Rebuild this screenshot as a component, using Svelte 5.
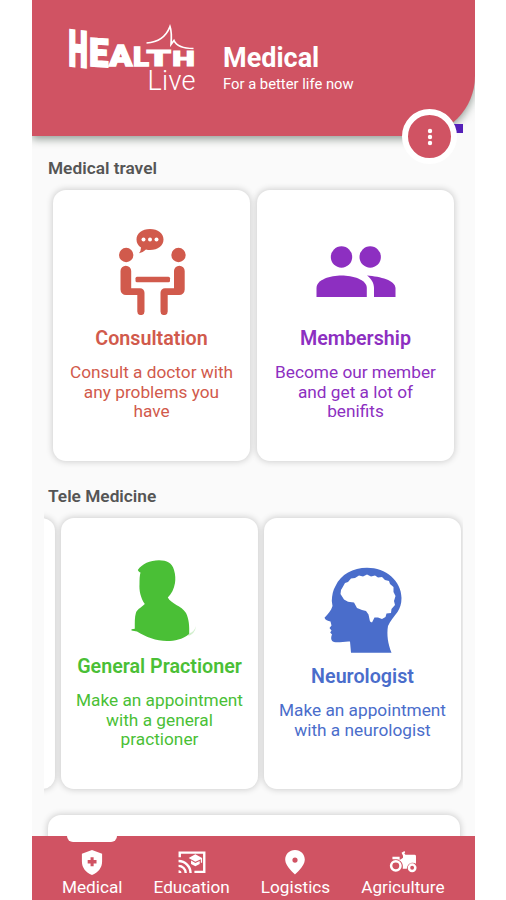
<script>
	const travel = [
		{
			icon: 'consultation',
			title: 'Consultation',
			lines: ['Consult a doctor with', 'any problems you', 'have'],
			tone: 'red'
		},
		{
			icon: 'members',
			title: 'Membership',
			lines: ['Become our member', 'and get a lot of', 'benifits'],
			tone: 'purple'
		}
	];

	const tele = [
		{
			icon: 'person',
			title: 'General Practioner',
			lines: ['Make an appointment', 'with a general', 'practioner'],
			tone: 'green'
		},
		{
			icon: 'brain',
			title: 'Neurologist',
			lines: ['Make an appointment', 'with a neurologist'],
			tone: 'blue'
		}
	];

	const tabs = [
		{ id: 'medical', label: 'Medical' },
		{ id: 'education', label: 'Education' },
		{ id: 'logistics', label: 'Logistics' },
		{ id: 'agriculture', label: 'Agriculture' }
	];

	// Each letter is squeezed towards the baseline to give the logo its slope
	const logo = [
		{ char: 'H', x: 0, width: 18.3, height: 38, skew: 6 },
		{ char: 'E', x: 21, width: 18, height: 29.5, skew: 4 },
		{ char: 'A', x: 39.5, width: 24, height: 22.5, skew: 0 },
		{ char: 'L', x: 64.5, width: 15, height: 19, skew: 0 },
		{ char: 'T', x: 77.5, width: 24, height: 17, skew: 0 },
		{ char: 'H', x: 104, width: 21.5, height: 15.5, skew: 0 }
	];
	// left edge and width of the inked part of each glyph at 100px
	const ink = { H: [2, 67], E: [2, 53], A: [-2, 71], L: [2, 51], T: [0, 62] };

	function letterTransform({ char, x, width, height, skew }) {
		const [left, inked] = ink[char];
		const sx = width / inked;
		const sy = height / 76;
		return `translate(${x - left * sx} ${42.5 - 2 * sy}) skewY(${skew}) scale(${sx} ${sy})`;
	}

	let active = $state('medical');
</script>

{#snippet picture(name)}
	<svg class="picture" viewBox="0 0 86 86" fill="currentColor">
		{#if name === 'consultation'}
			<circle cx="17.2" cy="26" r="7.2" />
			<circle cx="69.5" cy="26" r="7.2" />
			<path d="M11.5 42a5.3 5.3 0 0 1 10.7 0V59.3H31a4.5 4.5 0 0 1 4.5 4.5V82.5a3.6 3.6 0 0 1-7.2 0V66H17a5.5 5.5 0 0 1-5.5-5.5z" />
			<path d="M75.7 42a5.3 5.3 0 0 0-10.7 0V59.3H56a4.5 4.5 0 0 0-4.5 4.5V82.5a3.6 3.6 0 0 0 7.2 0V66H70.2a5.5 5.5 0 0 0 5.5-5.5z" />
			<rect x="26.5" y="47.7" width="34.5" height="5.6" rx="1.5" />
			<path d="M41 0c8 0 13.5 4.5 13.5 10.5S49 21 41 21q-2 0-4-.5-3 3-7 3.8 2-2.5 2-5.8c-3-2-4.5-4.5-4.5-8C27.5 4.5 33 0 41 0z" />
			<g class="dots">
				<circle cx="34.5" cy="10.5" r="2" />
				<circle cx="41" cy="10.5" r="2" />
				<circle cx="47.5" cy="10.5" r="2" />
			</g>
		{:else if name === 'members'}
			<circle cx="28.5" cy="28" r="10.7" />
			<circle cx="57.2" cy="28" r="10.7" />
			<path d="M3.5 68V59C3.5 50.5 17.5 46.5 28.5 46.5S53.8 50.5 53.8 59V68z" />
			<path d="M54 46.5C67.5 47.5 82.5 51.5 82.5 59V68H61V59C61 54 58.5 50 54 46.5z" />
		{:else if name === 'person'}
			<path d="M20.8 13C25 7 33 3.3 42 3.3C50 3.3 55 6 57 13C58.5 18 58.5 22 58 26C57 32 54.5 37 50.8 40.5C54 47 64.5 48.5 69 56C72 62 72.5 69 72.2 77C65 82.5 58 84 50 84C39 84 29 80 20 74.5L14.5 73.5V72.2L17.8 71.8C17.8 66 17.5 60 19 55.5C21 51.5 25 50 27.8 47C23.5 41 22 33 22.5 27C22.5 23 22.5 19 23.5 15.5C22.5 15.5 21.5 14.5 20.8 13z" />
			<path d="M73 76q4-1 6-7-1 8-8 10z" opacity=".25" />
		{:else}
			<path
				fill-rule="evenodd"
				d="M47 .7C66 .7 81.5 14 81.5 31C81.5 37 80 41 77.5 45C74 50 70 54 68 59C66.5 68 68 77 71.5 85.7H31L30 74.5C25 74 19 76 14 75C11 74 10.5 71 12 67.5L10.2 65.5L11.5 63.5L9.5 61L11.5 58.5L10.5 54.5C8 54 5 53 4.5 50.7C8 47 11 44 12.5 39L11.8 34C12 28 13 23 15.5 19C21 7 33 .7 47 .7zM20.5 27L24 32.5L28 34.7L34 35.5L37 41L42 43L46 44L48.5 47.5L50 54.5L52 55.5L54.5 50.5L58 50.5L62 52L65.5 50L66.5 46.5L71 46L71.5 42L75 38L74 34L75.5 29L73.5 25L73.5 20L70 17L69 14L65 13L62 10L58 10.5L55 8.5L51 9.5L47 7.5L43 9.5L39 8.5L35 11L31 11.5L28 15L25 16L22.5 20.5L21 23z"
			/>
		{/if}
	</svg>
{/snippet}

{#snippet tabIcon(name)}
	<svg class="tab-icon" viewBox="0 0 28 26" fill="currentColor">
		{#if name === 'medical'}
			<path fill-rule="evenodd" d="M14 0l10.5 4v8c0 6.5-4 11.5-10.5 14C7.500 23.500 3.500 18.500 3.500 12V4zM12.500 7.500V10.500H9.500v3.500H12.500V17h3.200v-3h3v-3.500h-3V7.500z" />
		{:else if name === 'education'}
			<path d="M0 1.5h28V24H16.5v-2.5h9V4h-23v3.5H0z" />
			<path d="M0 21a3 3 0 0 1 3 3H0z" />
			<path d="M0 16.5A7.5 7.5 0 0 1 7.5 24M0 11.5A12.5 12.5 0 0 1 12.5 24" fill="none" stroke="currentColor" stroke-width="2.5" />
			<path d="M17.5 4.5l7 3.7v5h-1.3V9.5l-5.7 2.8-7-4zM13 11l4.5 2.5L22 11.5v3l-4.5 2.3L13 14.5z" />
		{:else if name === 'logistics'}
			<path fill-rule="evenodd" d="M14 0C20 0 24.2 4.5 24.2 10.2 24.2 17 14 25.5 14 25.5S3.8 17 3.8 10.2C3.8 4.5 8 0 14 0zM14 7.8a2.7 2.7 0 1 0 0 5.4 2.7 2.7 0 0 0 0-5.4z" />
		{:else}
			<circle cx="6.5" cy="16.5" r="4.9" fill="none" stroke="currentColor" stroke-width="2.6" />
			<circle cx="23.5" cy="18.5" r="3.3" fill="none" stroke="currentColor" stroke-width="2.6" />
			<path d="M3 7h7.5v2.5H3zM14 6l-1.5-3.2L15.500 1l.8 1.500-1 .8L16.500 5H26q1.500 0 1.500 1.500v7.700c-4-2.200-9-.2-9.500 5.300h-4.300c1-5-1.700-9-6.200-9.500h4L14 8z" />
		{/if}
	</svg>
{/snippet}

{#snippet card(item)}
	<article class="card {item.tone}">
		{@render picture(item.icon)}
		<h3>{item.title}</h3>
		<p>
			{#each item.lines as line}
				<span>{line}</span>
			{/each}
		</p>
	</article>
{/snippet}

<div class="phone">
	<header>
		<svg class="logo" viewBox="0 0 128 70" fill="currentColor">
			{#each logo as letter}
				<text class="logo-letter" transform={letterTransform(letter)}>{letter.char}</text>
			{/each}
			<path d="M77.5 19Q95 18 101 2.5C103 8 102.5 14 102 20.5L105 16.5C107 21 111 24.5 124.5 24.5" fill="none" stroke="currentColor" stroke-width="1.7" />
			<text class="logo-live" x="78.5" y="66" textLength="48">Live</text>
		</svg>
		<div class="heading">
			<h1>Medical</h1>
			<p>For a better life now</p>
		</div>
		<span class="marker"></span>
		<button class="menu" type="button" aria-label="More">
			<svg viewBox="0 0 20 20" fill="currentColor">
				<circle cx="10" cy="4" r="2.2" />
				<circle cx="10" cy="10" r="2.2" />
				<circle cx="10" cy="16" r="2.2" />
			</svg>
		</button>
	</header>

	<main>
		<h2>Medical travel</h2>
		<div class="row first">
			{#each travel as item}
				{@render card(item)}
			{/each}
		</div>

		<h2>Tele Medicine</h2>
		<div class="row scrolled">
			<article class="card"></article>
			{#each tele as item}
				{@render card(item)}
			{/each}
		</div>

		<div class="wide-card"></div>
	</main>

	<nav>
		{#each tabs as tab (tab.id)}
			<button class="tab" class:active={active === tab.id} type="button" onclick={() => (active = tab.id)}>
				{@render tabIcon(tab.id)}
				<span>{tab.label}</span>
			</button>
		{/each}
	</nav>
</div>

<style>
	:global(body) {
		background: #fff;
	}
	.phone {
		display: flex;
		flex-direction: column;
		width: 443px;
		height: 900px;
		margin-left: 32px;
		overflow: hidden;
		background: #fafafa;
		font-family: Roboto, 'Liberation Sans', sans-serif;
	}
	h1,
	h2,
	h3,
	p {
		margin: 0;
	}
	button {
		padding: 0;
		border: none;
		font: inherit;
		color: inherit;
		cursor: pointer;
	}
	header {
		position: relative;
		z-index: 1;
		display: flex;
		flex: none;
		box-sizing: border-box;
		height: 136px;
		padding: 24px 0 0 37px;
		color: #fff;
		background: #d05363;
		border-bottom-right-radius: 60px;
		box-shadow: 0 3px 9px rgba(40, 60, 45, 0.5);
	}
	.logo {
		width: 128px;
		height: 70px;
		overflow: visible;
	}
	.logo-letter {
		font-size: 100px;
		font-weight: 900;
		stroke: currentColor;
		stroke-width: 5px;
	}
	.logo-live {
		font-size: 27px;
		font-weight: 300;
	}
	.heading {
		margin: 18px 0 0 26px;
	}
	h1 {
		font-size: 27px;
		font-weight: 700;
		line-height: 32px;
	}
	.heading p {
		font-size: 14.8px;
		line-height: 20px;
	}
	.marker {
		position: absolute;
		top: 124px;
		right: 12px;
		width: 9px;
		height: 9px;
		background: #5420b8;
	}
	.menu {
		position: absolute;
		right: 18px;
		bottom: -28px;
		display: flex;
		align-items: center;
		justify-content: center;
		width: 55px;
		height: 55px;
		border: 6px solid #fff;
		border-radius: 50%;
		background: #d05363;
	}
	.menu svg {
		width: 20px;
		height: 20px;
	}
	main {
		flex: 1;
		min-height: 0;
		padding: 20px 12px 0;
		overflow: hidden;
	}
	h2 {
		height: 24px;
		margin-left: 4px;
		color: #555;
		font-size: 17.3px;
		font-weight: 600;
		line-height: 24px;
	}
	.row {
		display: flex;
		gap: 6px;
		padding: 10px 0 23px;
		overflow: hidden;
	}
	.first {
		gap: 7px;
		padding-left: 9px;
	}
	.scrolled {
		justify-content: flex-end;
		padding-right: 2px;
		padding-bottom: 26px;
	}
	.card {
		display: flex;
		flex: none;
		flex-direction: column;
		align-items: center;
		justify-content: center;
		width: 197px;
		height: 271px;
		border-radius: 13px;
		background: #fff;
		box-shadow: 0 0 6px 1px rgba(0, 0, 0, 0.17);
		text-align: center;
	}
	.picture {
		width: 86px;
		height: 86px;
	}
	.dots {
		fill: #fff;
	}
	h3 {
		margin: 13px 0;
		font-size: 19.7px;
		font-weight: 600;
		line-height: 22px;
	}
	.card p {
		font-size: 17.25px;
		line-height: 19.9px;
	}
	.card p span {
		display: block;
	}
	.red {
		color: #d15a4c;
	}
	.purple {
		color: #8d2fc1;
	}
	.green {
		color: #4abf36;
	}
	.blue {
		color: #4a6dcb;
	}
	.wide-card {
		width: 412px;
		height: 100px;
		margin-left: 4px;
		border-radius: 13px;
		background: #fff;
		box-shadow: 0 0 6px 1px rgba(0, 0, 0, 0.17);
	}
	nav {
		z-index: 1;
		display: flex;
		flex: none;
		gap: 31px;
		box-sizing: border-box;
		height: 64px;
		padding: 14px 0 0 30px;
		color: #fff;
		background: #d05363;
	}
	.tab {
		position: relative;
		display: flex;
		flex-direction: column;
		align-items: center;
		background: none;
		font-size: 17.2px;
		line-height: 25px;
	}
	.tab.active::before {
		content: '';
		position: absolute;
		top: -14px;
		width: 50px;
		height: 6px;
		border-radius: 0 0 6px 6px;
		background: #fff;
	}
	.tab-icon {
		width: 28px;
		height: 26px;
	}
</style>
